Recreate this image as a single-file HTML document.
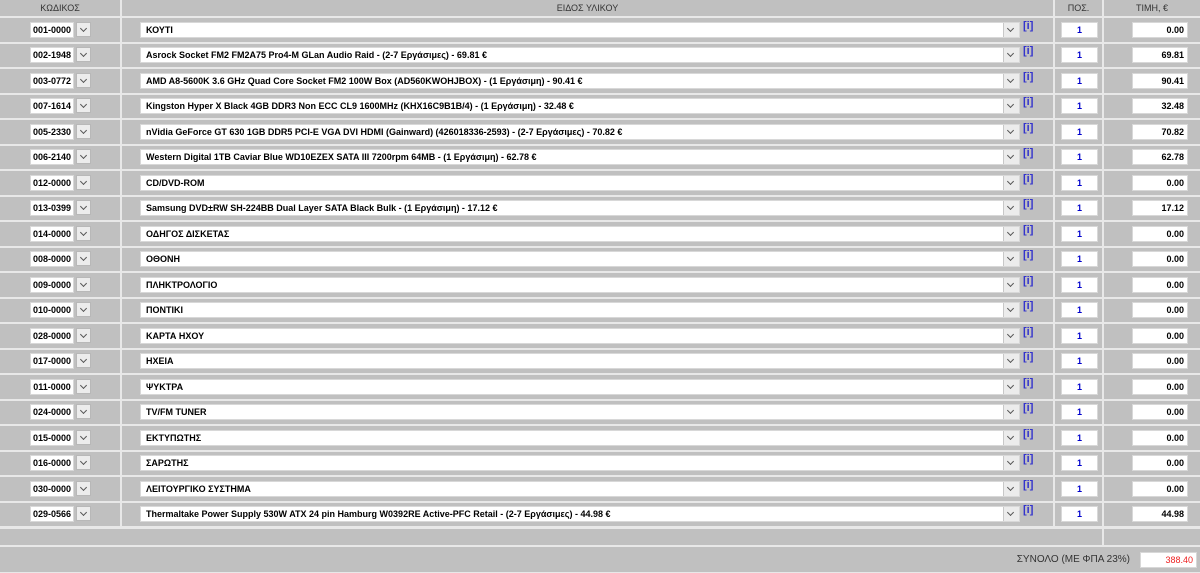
<!DOCTYPE html>
<html><head><meta charset="utf-8"><style>
*{margin:0;padding:0;box-sizing:border-box}
body{width:1200px;height:573px;background:#e8e8e8;font-family:"Liberation Sans",Arial,sans-serif;overflow:hidden;position:relative}
.r{position:absolute;left:0;width:1200px}
.c{position:absolute;top:0;bottom:0;background:#c0c0c0}
.c1{left:0;width:120px}.c2{left:122px;width:931px}.c3{left:1055px;width:47px}.c4{left:1104px;width:96px}
.h{font-size:9px;color:#333;text-align:center;line-height:16px}
.in{position:absolute;background:#fff;border:1px solid #d8d8d8;font-size:9px;font-weight:bold;height:16px;line-height:14px;top:50%;margin-top:-8px}
.code{left:30px;width:44px;text-align:center}
.btn{position:absolute;left:76px;width:15px;height:15px;top:50%;margin-top:-8px;background:#ececec;border:1px solid #b8b8b8}
.btn:after,.sa:after{content:"";position:absolute;left:4px;top:3px;width:4px;height:4px;border-right:1px solid #555;border-bottom:1px solid #555;transform:rotate(45deg)}
.desc{left:140px;width:880px;padding-left:5px}
.sa{position:absolute;right:0;top:0;width:16px;height:14px;background:#ececec;border-left:1px solid #c8c8c8}
.info{position:absolute;left:1023px;top:50%;margin-top:-10px;font-size:11px;color:#33c;font-weight:bold}
.q{left:1061px;width:37px;text-align:center;color:#00c}
.p{left:1132px;width:56px;text-align:right;padding-right:3px}
</style></head><body>
<div class="r h" style="top:0;height:16px">
<div class="c c1">ΚΩΔΙΚΟΣ</div><div class="c c2">ΕΙΔΟΣ ΥΛΙΚΟΥ</div><div class="c c3">ΠΟΣ.</div><div class="c c4">ΤΙΜΗ, €</div></div>

<div class="r" style="top:18px;height:23.5px"><div class="c c1"><div class="in code">001-0000</div><div class="btn"></div></div><div class="c c2"></div><div class="in desc">ΚΟΥΤΙ<div class="sa"></div></div><div class="info">[i]</div><div class="c c3"></div><div class="in q">1</div><div class="c c4"></div><div class="in p">0.00</div></div>
<div class="r" style="top:43.5px;height:23.5px"><div class="c c1"><div class="in code">002-1948</div><div class="btn"></div></div><div class="c c2"></div><div class="in desc">Asrock Socket FM2 FM2A75 Pro4-M GLan Audio Raid - (2-7 Εργάσιμες) - 69.81 €<div class="sa"></div></div><div class="info">[i]</div><div class="c c3"></div><div class="in q">1</div><div class="c c4"></div><div class="in p">69.81</div></div>
<div class="r" style="top:69px;height:23.5px"><div class="c c1"><div class="in code">003-0772</div><div class="btn"></div></div><div class="c c2"></div><div class="in desc">AMD A8-5600K 3.6 GHz Quad Core Socket FM2 100W Box (AD560KWOHJBOX) - (1 Εργάσιμη) - 90.41 €<div class="sa"></div></div><div class="info">[i]</div><div class="c c3"></div><div class="in q">1</div><div class="c c4"></div><div class="in p">90.41</div></div>
<div class="r" style="top:94.5px;height:23.5px"><div class="c c1"><div class="in code">007-1614</div><div class="btn"></div></div><div class="c c2"></div><div class="in desc">Kingston Hyper X Black 4GB DDR3 Non ECC CL9 1600MHz (KHX16C9B1B/4) - (1 Εργάσιμη) - 32.48 €<div class="sa"></div></div><div class="info">[i]</div><div class="c c3"></div><div class="in q">1</div><div class="c c4"></div><div class="in p">32.48</div></div>
<div class="r" style="top:120px;height:23.5px"><div class="c c1"><div class="in code">005-2330</div><div class="btn"></div></div><div class="c c2"></div><div class="in desc">nVidia GeForce GT 630 1GB DDR5 PCI-E VGA DVI HDMI (Gainward) (426018336-2593) - (2-7 Εργάσιμες) - 70.82 €<div class="sa"></div></div><div class="info">[i]</div><div class="c c3"></div><div class="in q">1</div><div class="c c4"></div><div class="in p">70.82</div></div>
<div class="r" style="top:145.5px;height:23.5px"><div class="c c1"><div class="in code">006-2140</div><div class="btn"></div></div><div class="c c2"></div><div class="in desc">Western Digital 1TB Caviar Blue WD10EZEX SATA III 7200rpm 64MB - (1 Εργάσιμη) - 62.78 €<div class="sa"></div></div><div class="info">[i]</div><div class="c c3"></div><div class="in q">1</div><div class="c c4"></div><div class="in p">62.78</div></div>
<div class="r" style="top:171px;height:23.5px"><div class="c c1"><div class="in code">012-0000</div><div class="btn"></div></div><div class="c c2"></div><div class="in desc">CD/DVD-ROM<div class="sa"></div></div><div class="info">[i]</div><div class="c c3"></div><div class="in q">1</div><div class="c c4"></div><div class="in p">0.00</div></div>
<div class="r" style="top:196.5px;height:23.5px"><div class="c c1"><div class="in code">013-0399</div><div class="btn"></div></div><div class="c c2"></div><div class="in desc">Samsung DVD±RW SH-224BB Dual Layer SATA Black Bulk - (1 Εργάσιμη) - 17.12 €<div class="sa"></div></div><div class="info">[i]</div><div class="c c3"></div><div class="in q">1</div><div class="c c4"></div><div class="in p">17.12</div></div>
<div class="r" style="top:222px;height:23.5px"><div class="c c1"><div class="in code">014-0000</div><div class="btn"></div></div><div class="c c2"></div><div class="in desc">ΟΔΗΓΟΣ ΔΙΣΚΕΤΑΣ<div class="sa"></div></div><div class="info">[i]</div><div class="c c3"></div><div class="in q">1</div><div class="c c4"></div><div class="in p">0.00</div></div>
<div class="r" style="top:247.5px;height:23.5px"><div class="c c1"><div class="in code">008-0000</div><div class="btn"></div></div><div class="c c2"></div><div class="in desc">ΟΘΟΝΗ<div class="sa"></div></div><div class="info">[i]</div><div class="c c3"></div><div class="in q">1</div><div class="c c4"></div><div class="in p">0.00</div></div>
<div class="r" style="top:273px;height:23.5px"><div class="c c1"><div class="in code">009-0000</div><div class="btn"></div></div><div class="c c2"></div><div class="in desc">ΠΛΗΚΤΡΟΛΟΓΙΟ<div class="sa"></div></div><div class="info">[i]</div><div class="c c3"></div><div class="in q">1</div><div class="c c4"></div><div class="in p">0.00</div></div>
<div class="r" style="top:298.5px;height:23.5px"><div class="c c1"><div class="in code">010-0000</div><div class="btn"></div></div><div class="c c2"></div><div class="in desc">ΠΟΝΤΙΚΙ<div class="sa"></div></div><div class="info">[i]</div><div class="c c3"></div><div class="in q">1</div><div class="c c4"></div><div class="in p">0.00</div></div>
<div class="r" style="top:324px;height:23.5px"><div class="c c1"><div class="in code">028-0000</div><div class="btn"></div></div><div class="c c2"></div><div class="in desc">ΚΑΡΤΑ ΗΧΟΥ<div class="sa"></div></div><div class="info">[i]</div><div class="c c3"></div><div class="in q">1</div><div class="c c4"></div><div class="in p">0.00</div></div>
<div class="r" style="top:349.5px;height:23.5px"><div class="c c1"><div class="in code">017-0000</div><div class="btn"></div></div><div class="c c2"></div><div class="in desc">ΗΧΕΙΑ<div class="sa"></div></div><div class="info">[i]</div><div class="c c3"></div><div class="in q">1</div><div class="c c4"></div><div class="in p">0.00</div></div>
<div class="r" style="top:375px;height:23.5px"><div class="c c1"><div class="in code">011-0000</div><div class="btn"></div></div><div class="c c2"></div><div class="in desc">ΨΥΚΤΡΑ<div class="sa"></div></div><div class="info">[i]</div><div class="c c3"></div><div class="in q">1</div><div class="c c4"></div><div class="in p">0.00</div></div>
<div class="r" style="top:400.5px;height:23.5px"><div class="c c1"><div class="in code">024-0000</div><div class="btn"></div></div><div class="c c2"></div><div class="in desc">TV/FM TUNER<div class="sa"></div></div><div class="info">[i]</div><div class="c c3"></div><div class="in q">1</div><div class="c c4"></div><div class="in p">0.00</div></div>
<div class="r" style="top:426px;height:23.5px"><div class="c c1"><div class="in code">015-0000</div><div class="btn"></div></div><div class="c c2"></div><div class="in desc">ΕΚΤΥΠΩΤΗΣ<div class="sa"></div></div><div class="info">[i]</div><div class="c c3"></div><div class="in q">1</div><div class="c c4"></div><div class="in p">0.00</div></div>
<div class="r" style="top:451.5px;height:23.5px"><div class="c c1"><div class="in code">016-0000</div><div class="btn"></div></div><div class="c c2"></div><div class="in desc">ΣΑΡΩΤΗΣ<div class="sa"></div></div><div class="info">[i]</div><div class="c c3"></div><div class="in q">1</div><div class="c c4"></div><div class="in p">0.00</div></div>
<div class="r" style="top:477px;height:23.5px"><div class="c c1"><div class="in code">030-0000</div><div class="btn"></div></div><div class="c c2"></div><div class="in desc">ΛΕΙΤΟΥΡΓΙΚΟ ΣΥΣΤΗΜΑ<div class="sa"></div></div><div class="info">[i]</div><div class="c c3"></div><div class="in q">1</div><div class="c c4"></div><div class="in p">0.00</div></div>
<div class="r" style="top:502.5px;height:23.5px"><div class="c c1"><div class="in code">029-0566</div><div class="btn"></div></div><div class="c c2"></div><div class="in desc">Thermaltake Power Supply 530W ATX 24 pin Hamburg W0392RE Active-PFC Retail - (2-7 Εργάσιμες) - 44.98 €<div class="sa"></div></div><div class="info">[i]</div><div class="c c3"></div><div class="in q">1</div><div class="c c4"></div><div class="in p">44.98</div></div>

<div class="r" style="top:529px;height:16px"><div class="c" style="left:0;width:1102px"></div><div class="c c4"></div></div>
<div class="r" style="top:547px;height:25px"><div class="c" style="left:0;width:1200px"></div>
<div style="position:absolute;right:70px;top:0;line-height:25px;font-size:10px;color:#333">ΣΥΝΟΛΟ (ΜΕ ΦΠΑ 23%)</div>
<div class="in" style="left:1140px;width:57px;text-align:right;padding-right:3px;color:#e22;font-weight:normal">388.40</div></div>
</body></html>
